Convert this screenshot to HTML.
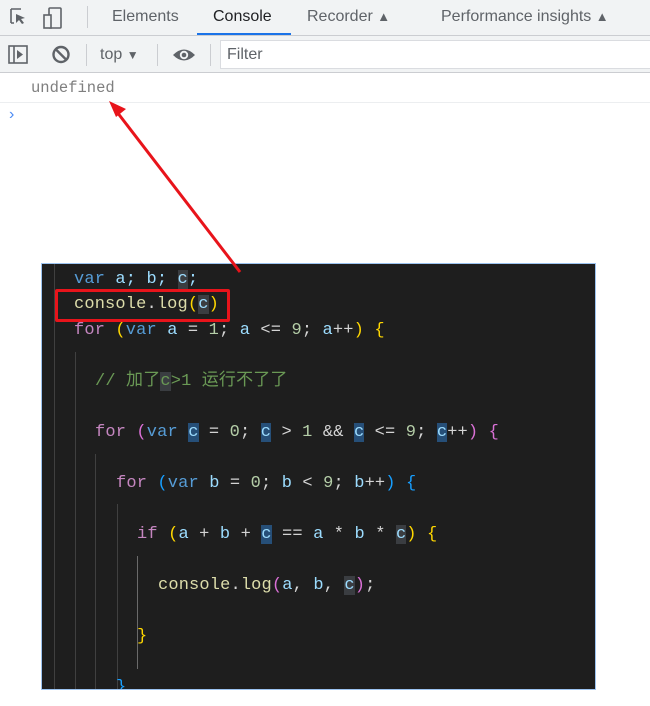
<!DOCTYPE html>
<html><head><meta charset="utf-8"><style>
body{margin:0;width:650px;height:706px;background:#fff;position:relative;overflow:hidden;font-family:"Liberation Sans",sans-serif}
.abs{position:absolute}
.tab{position:absolute;top:8px;font-size:16px;color:#5f6368}
.code{position:absolute;left:41px;top:263px;width:553px;height:425px;background:#1e1e1e;border:1px solid #9cc3f0;overflow:hidden;font-family:"Liberation Mono","Noto Sans CJK SC",monospace;font-size:17px;letter-spacing:0.15px;color:#9cdcfe}
.ln{position:absolute;white-space:pre;line-height:22px}
.k{color:#c586c0}.v{color:#569cd6}.f{color:#dcdcaa}.n{color:#b5cea8}.y{color:#ffd700}.p{color:#da70d6}.b{color:#179fff}.w{color:#d4d4d4}.c{color:#6a9955}
.h{background:#264f78}.h2{background:#3a3d41}
.g{position:absolute;top:0;bottom:0;width:1px;background:#404040}
</style></head><body>
<div class="abs" style="left:0;top:0;width:650px;height:35px;background:#f1f3f4;border-bottom:1px solid #cbcdd1"></div>
<svg class="abs" style="left:8px;top:6px" width="62" height="24" viewBox="0 0 62 24"><path d="M3 3h10M3 3v14M3 17h3" stroke="#5f6368" stroke-width="1.6" fill="none"/><path d="M8 8l9 4-4 1 3 4-2 1-3-4-3 3z" fill="#5f6368"/><rect x="41" y="2" width="12" height="20" rx="1" stroke="#5f6368" stroke-width="1.6" fill="none"/><rect x="36" y="9" width="7" height="13" stroke="#5f6368" stroke-width="1.6" fill="#f1f3f4"/></svg>
<div class="abs" style="left:87px;top:6px;width:1px;height:22px;background:#cbcdd1"></div>
<div class="tab" style="left:112px">Elements</div>
<div class="tab" style="left:213px;color:#202124">Console</div>
<div class="abs" style="left:197px;top:33px;width:94px;height:2px;background:#1a73e8"></div>
<div class="tab" style="left:307px">Recorder <span style="font-size:13px">▲</span></div>
<div class="tab" style="left:441px">Performance insights <span style="font-size:13px">▲</span></div>
<div class="abs" style="left:0;top:36px;width:650px;height:36px;background:#f1f3f4;border-bottom:1px solid #cbcdd1"></div>
<svg class="abs" style="left:8px;top:44px" width="190" height="22"><rect x="1" y="2" width="18" height="17" stroke="#5f6368" stroke-width="1.6" fill="none"/><path d="M6 2v17" stroke="#5f6368" stroke-width="1.6"/><path d="M9 6l6 4.5-6 4.5z" fill="#5f6368"/><circle cx="53" cy="10.5" r="7.5" stroke="#5f6368" stroke-width="2.4" fill="none"/><path d="M48 5.5l10 10" stroke="#5f6368" stroke-width="2.4"/></svg>
<div class="abs" style="left:86px;top:44px;width:1px;height:22px;background:#cbcdd1"></div>
<div class="abs" style="left:100px;top:46px;font-size:16px;color:#5f6368">top <span style="font-size:12px">▼</span></div>
<div class="abs" style="left:157px;top:44px;width:1px;height:22px;background:#cbcdd1"></div>
<svg class="abs" style="left:172px;top:45px" width="24" height="20"><path d="M1 10Q12-1 23 10Q12 21 1 10z" fill="#5f6368"/><circle cx="12" cy="10" r="4.2" fill="#f1f3f4"/><circle cx="12" cy="10" r="2.3" fill="#5f6368"/></svg>
<div class="abs" style="left:210px;top:44px;width:1px;height:22px;background:#cbcdd1"></div>
<div class="abs" style="left:220px;top:40px;width:440px;height:27px;background:#fff;border:1px solid #dadce0"></div>
<div class="abs" style="left:227px;top:46px;font-size:16px;color:#5f6368">Filter</div>
<div class="abs" style="left:31px;top:79px;font-family:'Liberation Mono',monospace;font-size:15.5px;color:#7f7f7f">undefined</div>
<div class="abs" style="left:0;top:102px;width:650px;height:1px;background:#eceef0"></div>
<div class="abs" style="left:9px;top:106px;font-size:16px;color:#4a8af4">›</div>

<div class="code">
<div class="g" style="left:12px"></div><div class="g" style="left:33px;top:88px"></div><div class="g" style="left:53px;top:190px"></div><div class="g" style="left:75px;top:240px"></div><div class="g" style="left:95px;top:292px;bottom:20px;background:#6a6a6a"></div>
<div class="ln" style="left:32px;top:5px"><span class="v">var</span> a; b; <span class="h2">c</span>;</div>
<div class="ln" style="left:32px;top:30px"><span class="f">console</span><span class="w">.</span><span class="f">log</span><span class="y">(</span><span class="h2">c</span><span class="y">)</span></div>
<div class="ln" style="left:32px;top:56px"><span class="k">for</span> <span class="y">(</span><span class="v">var</span> a <span class="w">=</span> <span class="n">1</span><span class="w">;</span> a <span class="w">&lt;=</span> <span class="n">9</span><span class="w">;</span> a<span class="w">++</span><span class="y">)</span> <span class="y">{</span></div>
<div class="ln c" style="left:53px;top:107px">// 加了<span class="h2">c</span>&gt;1 运行不了了</div>
<div class="ln" style="left:53px;top:158px"><span class="k">for</span> <span class="p">(</span><span class="v">var</span> <span class="h">c</span> <span class="w">=</span> <span class="n">0</span><span class="w">;</span> <span class="h">c</span> <span class="w">&gt;</span> <span class="n">1</span> <span class="w">&amp;&amp;</span> <span class="h">c</span> <span class="w">&lt;=</span> <span class="n">9</span><span class="w">;</span> <span class="h">c</span><span class="w">++</span><span class="p">)</span> <span class="p">{</span></div>
<div class="ln" style="left:74px;top:209px"><span class="k">for</span> <span class="b">(</span><span class="v">var</span> b <span class="w">=</span> <span class="n">0</span><span class="w">;</span> b <span class="w">&lt;</span> <span class="n">9</span><span class="w">;</span> b<span class="w">++</span><span class="b">)</span> <span class="b">{</span></div>
<div class="ln" style="left:95px;top:260px"><span class="k">if</span> <span class="y">(</span>a <span class="w">+</span> b <span class="w">+</span> <span class="h">c</span> <span class="w">==</span> a <span class="w">*</span> b <span class="w">*</span> <span class="h2">c</span><span class="y">)</span> <span class="y">{</span></div>
<div class="ln" style="left:116px;top:311px"><span class="f">console</span><span class="w">.</span><span class="f">log</span><span class="p">(</span>a<span class="w">,</span> b<span class="w">,</span> <span class="h2">c</span><span class="p">)</span><span class="w">;</span></div>
<div class="ln y" style="left:95px;top:362px">}</div>
<div class="ln b" style="left:74px;top:413px">}</div>
</div>
<div class="abs" style="left:55px;top:289px;width:169px;height:27px;border:3px solid #e8141b;border-radius:2px"></div>
<svg class="abs" style="left:0;top:0" width="650" height="706"><path d="M240 272L117 112" stroke="#e8141b" stroke-width="3"/><path d="M109 101l17 8-10 8z" fill="#e8141b"/></svg>
</body></html>
